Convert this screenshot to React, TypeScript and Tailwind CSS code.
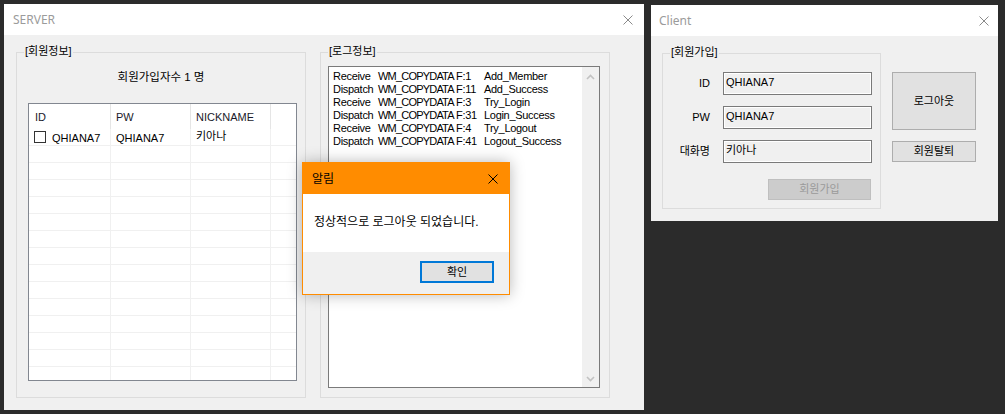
import type { ReactNode } from "react";

const font = "font-['Liberation_Sans','Noto_Sans_CJK_KR',sans-serif]";

const logs = [
  ["Receive", "WM_COPYDATA", "F:1", "Add_Member"],
  ["Dispatch", "WM_COPYDATA", "F:11", "Add_Success"],
  ["Receive", "WM_COPYDATA", "F:3", "Try_Login"],
  ["Dispatch", "WM_COPYDATA", "F:31", "Login_Success"],
  ["Receive", "WM_COPYDATA", "F:4", "Try_Logout"],
  ["Dispatch", "WM_COPYDATA", "F:41", "Logout_Success"],
];

const CloseX = ({ color = "#8a8a8a", size = 10 }: { color?: string; size?: number }) => (
  <svg width={size} height={size} viewBox="0 0 10 10" fill="none">
    <path d="M0.5 0.5L9.5 9.5M9.5 0.5L0.5 9.5" stroke={color} strokeWidth="1" />
  </svg>
);

const Chevron = ({ down = false }: { down?: boolean }) => (
  <svg width="9" height="6" viewBox="0 0 9 6" fill="none">
    <path d={down ? "M1 1L4.5 4.5L8 1" : "M1 5L4.5 1.5L8 5"} stroke="#c2c2c2" strokeWidth="1.6" />
  </svg>
);

const GroupBox = ({ label, className, children }: { label: string; className: string; children?: ReactNode }) => (
  <div className={`relative border border-[#dcdcdc] ${className}`}>
    <span className="absolute -top-[8px] left-[7px] bg-[#f0f0f0] px-[1px] text-[11px] leading-[13px] text-black">{label}</span>
    {children}
  </div>
);

const TitleBar = ({ title, pl, pr }: { title: string; pl: string; pr: string }) => (
  <div className={`h-[31px] bg-white flex items-center justify-between ${pl} ${pr}`}>
    <span className="font-['Noto_Sans',sans-serif] text-[12px] text-[#9b9b9b]">{title}</span>
    <CloseX />
  </div>
);

const Field = ({ label, value }: { label: string; value: string }) => (
  <div className="flex items-center gap-[13px]">
    <span className="w-[47px] text-right text-[11px] leading-[13px]">{label}</span>
    <div className="w-[149px] h-[23px] border border-[#7a7a7a] bg-[#f0f0f0] shadow-[inset_0_0_0_1px_#ffffff] pl-[2px] pt-[3px] text-[11px] leading-[13px]">
      {value}
    </div>
  </div>
);

export default function App() {
  return (
    <div className={`relative w-[1005px] h-[414px] bg-[#2b2b2b] flex items-start pl-[4px] pt-[4px] overflow-hidden text-black ${font}`}>
      {/* SERVER */}
      <div className="w-[640px] h-[406px] bg-[#f0f0f0] flex flex-col">
        <TitleBar title="SERVER" pl="pl-[9px]" pr="pr-[11px]" />
        <div className="flex pl-[12px] pt-[17px] gap-[14px]">
          <GroupBox label="[회원정보]" className="w-[290px] h-[346px] flex flex-col pt-[18px]">
            <div className="text-center text-[11.5px] leading-[13px]">회원가입자수 1 명</div>
            <div className="mt-[19px] ml-[11px] w-[269px] h-[278px] border border-[#828790] bg-white overflow-hidden">
              <div className="flex h-[25px] text-[11px] leading-[13px] text-[#1a1a2a]">
                <div className="w-[82px] border-r border-[#e5e5e5] pl-[6px] pt-[7px]">ID</div>
                <div className="w-[80px] border-r border-[#e5e5e5] pl-[5px] pt-[7px]">PW</div>
                <div className="w-[80px] border-r border-[#e5e5e5] pl-[5px] pt-[7px]">NICKNAME</div>
                <div className="flex-1" />
              </div>
              {Array.from({ length: 15 }).map((_, i) => (
                <div key={i} className="flex h-[17px] border-b border-[#f0f0f0] text-[11px] leading-[13px]">
                  <div className="w-[82px] border-r border-[#f0f0f0] pl-[5px] flex items-start">
                    {i === 0 && (
                      <>
                        <span className="mt-[2px] w-[12px] h-[12px] border border-[#333333] bg-white" />
                        <span className="ml-[6px] mt-[3px]">QHIANA7</span>
                      </>
                    )}
                  </div>
                  <div className="w-[80px] border-r border-[#f0f0f0] pl-[5px] pt-[3px]">{i === 0 && "QHIANA7"}</div>
                  <div className="w-[80px] border-r border-[#f0f0f0] pl-[5px] pt-[1px]">{i === 0 && "키아나"}</div>
                  <div className="flex-1" />
                </div>
              ))}
            </div>
          </GroupBox>

          <GroupBox label="[로그정보]" className="w-[290px] h-[346px] pt-[13px] pl-[7px]">
            <div className="w-[272px] h-[322px] border border-[#7a7a7a] bg-white flex">
              <div className="flex-1 pl-[4px] pt-[3px] text-[11px] leading-[13px]">
                {logs.map((l, i) => (
                  <div key={i} className="grid grid-cols-[45px_78px_28px_auto] whitespace-nowrap">
                    <span className="tracking-[-0.3px]">{l[0]}</span>
                    <span className="tracking-[-0.8px]">{l[1]}</span>
                    <span className="tracking-[-0.3px]">{l[2]}</span>
                    <span className="tracking-[-0.3px]">{l[3]}</span>
                  </div>
                ))}
              </div>
              <div className="w-[17px] bg-[#f0f0f0] flex flex-col items-center justify-between pt-[7px] pb-[5px]">
                <Chevron />
                <Chevron down />
              </div>
            </div>
          </GroupBox>
        </div>
      </div>

      {/* Client */}
      <div className="ml-[7px] mt-[1px] w-[347px] h-[216px] bg-[#f0f0f0] flex flex-col">
        <TitleBar title="Client" pl="pl-[8px]" pr="pr-[9px]" />
        <div className="flex pl-[11px] pt-[17px] gap-[11px] text-[11px] leading-[13px]">
          <GroupBox label="[회원가입]" className="w-[219px] h-[156px] pt-[18px] flex flex-col gap-[11px]">
            <Field label="ID" value="QHIANA7" />
            <Field label="PW" value="QHIANA7" />
            <Field label="대화명" value="키아나" />
            <div className="flex justify-end pr-[9px] mt-[5px]">
              <div className="w-[103px] h-[21px] bg-[#cccccc] border border-[#bfbfbf] text-[#9a9a9a] flex items-center justify-center">
                회원가입
              </div>
            </div>
          </GroupBox>
          <div className="mt-[19px] flex flex-col gap-[11px]">
            <div className="w-[84px] h-[58px] bg-[#e1e1e1] border border-[#adadad] flex items-center justify-center">로그아웃</div>
            <div className="w-[84px] h-[21px] bg-[#e1e1e1] border border-[#adadad] flex items-center justify-center">회원탈퇴</div>
          </div>
        </div>
      </div>

      {/* 알림 dialog */}
      <div className="absolute left-[302px] top-[162px] w-[208px] h-[133px] border border-[#ff8c00] flex flex-col shadow-[0_0_14px_rgba(0,0,0,0.28)]">
        <div className="h-[31px] bg-[#ff8c00] flex items-center justify-between pl-[9px] pr-[11px]">
          <span className="text-[12px] leading-[14px]">알림</span>
          <CloseX color="#000000" size={10} />
        </div>
        <div className="h-[58px] bg-white pl-[11px] pt-[22px] text-[12px] leading-[13px]">
          정상적으로 로그아웃 되었습니다.
        </div>
        <div className="flex-1 bg-[#f0f0f0] flex justify-end items-start pt-[9px] pr-[15px]">
          <div className="w-[74px] h-[22px] bg-[#e1e1e1] border-2 border-[#0078d7] flex items-center justify-center text-[11px]">
            확인
          </div>
        </div>
      </div>
    </div>
  );
}
